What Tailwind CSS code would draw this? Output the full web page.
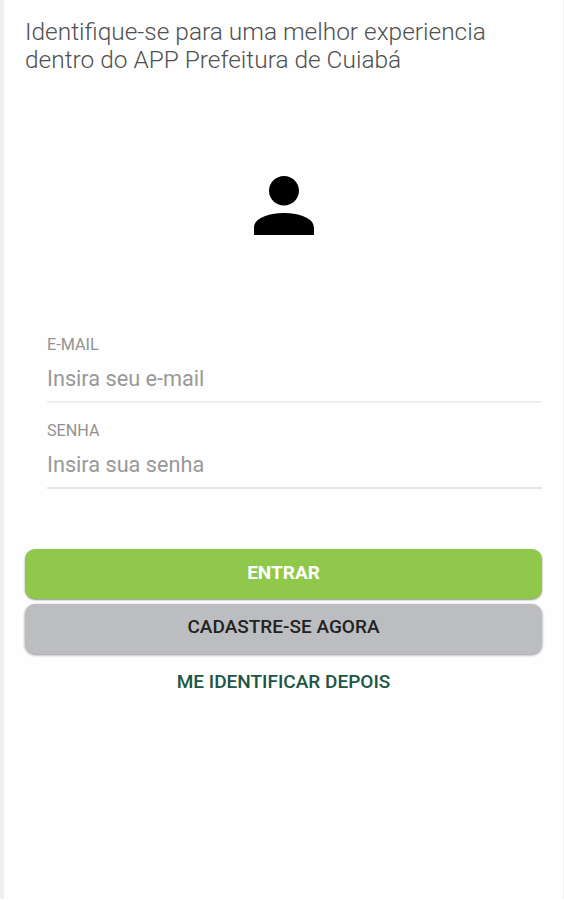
<!DOCTYPE html>
<html lang="pt-BR">
  <head>
    <meta charset="UTF-8" />
    <meta name="viewport" content="width=device-width, initial-scale=1.0" />
    <title>Prefeitura de Cuiabá</title>
    <script src="https://cdn.jsdelivr.net/npm/@tailwindcss/browser@4"></script>
  </head>
  <body class="h-[900px] overflow-hidden bg-white font-['Roboto',sans-serif]">
    <main class="h-[899px] border-l-4 border-r border-[#efefef] bg-[#fefefe] pt-[18px] pl-[21px] pr-[21px]">
      <h1 class="whitespace-nowrap text-[24.45px] leading-7 font-light text-[#505050]">
        Identifique-se para uma melhor experiencia<br />dentro do APP Prefeitura de Cuiabá
      </h1>

      <!-- User icon -->
      <div class="mt-[102px] flex justify-center">
        <svg class="h-[59px] w-[60px]" viewBox="64 64 384 384" preserveAspectRatio="none" fill="#000">
          <path d="M256 256c52.805 0 96-43.201 96-96s-43.195-96-96-96-96 43.201-96 96 43.195 96 96 96zm0 48c-63.598 0-192 20-192 96v48h384v-48c0-76-128.402-96-192-96z" />
        </svg>
      </div>

      <!-- Login form -->
      <form>
        <div class="mt-[100px] ml-[22px] h-[68px] border-b-2 border-[#efefef]">
          <label for="email" class="block text-[16.2px] leading-5 text-[#929292]">E-MAIL</label>
          <input type="email" id="email" placeholder="Insira seu e-mail" class="mt-[11px] block h-[27px] w-full text-[21.7px] outline-none placeholder:text-[#999999]" />
        </div>
        <div class="mt-[18px] ml-[22px] h-[68px] border-b-2 border-[#e6e6e6]">
          <label for="senha" class="block text-[16.2px] leading-5 text-[#929292]">SENHA</label>
          <input type="password" id="senha" placeholder="Insira sua senha" class="mt-[11px] block h-[27px] w-full text-[21.7px] outline-none placeholder:text-[#999999]" />
        </div>

        <button type="submit" class="mt-[60px] block h-[50px] w-full rounded-[10px] bg-[#8fc84a] pb-0.5 text-[19px] font-bold text-white shadow-[0_1px_2px_rgba(0,0,0,0.45)]">
          ENTRAR
        </button>
        <button type="button" class="mt-[5px] block h-[50px] w-full rounded-[10px] bg-[#bcbdc1] pb-1 text-[19px] font-medium text-[#222222] shadow-[0_1px_3px_rgba(0,0,0,0.45)]">
          CADASTRE-SE AGORA
        </button>
        <button type="button" class="mt-[3px] block h-[50px] w-full text-[19px] font-medium text-[#1d5545]">
          ME IDENTIFICAR DEPOIS
        </button>
      </form>
    </main>
  </body>
</html>
